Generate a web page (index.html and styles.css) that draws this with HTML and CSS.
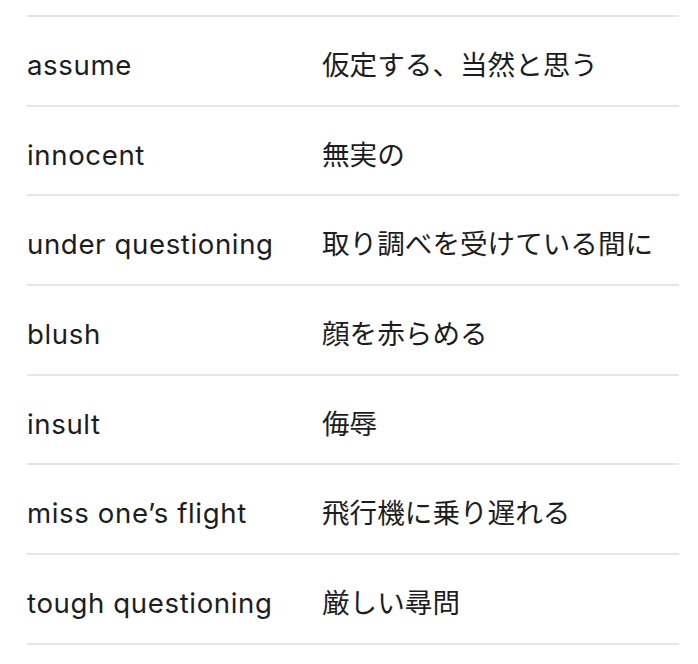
FILE: index.html
```html
<!DOCTYPE html>
<html lang="ja">
<head>
<meta charset="utf-8">
<link rel="stylesheet" href="styles.css">
</head>
<body>
<div class="page">
  <table class="vocab">
    <tbody>
      <tr><td class="en">assume</td><td class="ja">仮定する、当然と思う</td></tr>
      <tr><td class="en">innocent</td><td class="ja">無実の</td></tr>
      <tr><td class="en">under questioning</td><td class="ja">取り調べを受けている間に</td></tr>
      <tr><td class="en">blush</td><td class="ja">顔を赤らめる</td></tr>
      <tr><td class="en">insult</td><td class="ja">侮辱</td></tr>
      <tr><td class="en">miss one’s flight</td><td class="ja">飛行機に乗り遅れる</td></tr>
      <tr><td class="en">tough questioning</td><td class="ja">厳しい尋問</td></tr>
    </tbody>
  </table>
</div>
</body>
</html>
```
FILE: styles.css
```css
html, body {
  margin: 0;
  padding: 0;
  background: #ffffff;
}
.page {
  padding: 15px 0 0 27px;
}
.vocab {
  width: 652px;
  border-collapse: collapse;
  font-family: Inter, "Noto Sans CJK JP", sans-serif;
  color: #1d1d1f;
}
.vocab tr {
  border-top: 2px solid #e6e6e6;
  border-bottom: 2px solid #e6e6e6;
  height: 89.7px;
}
.vocab td {
  padding: 0;
  vertical-align: middle;
}
.vocab .en {
  width: 295px;
  font-size: 27.6px;
  letter-spacing: 0.62px;
  padding-top: 8px;
}
.vocab .ja {
  font-size: 27.6px;
  padding-top: 4px;
}
```
